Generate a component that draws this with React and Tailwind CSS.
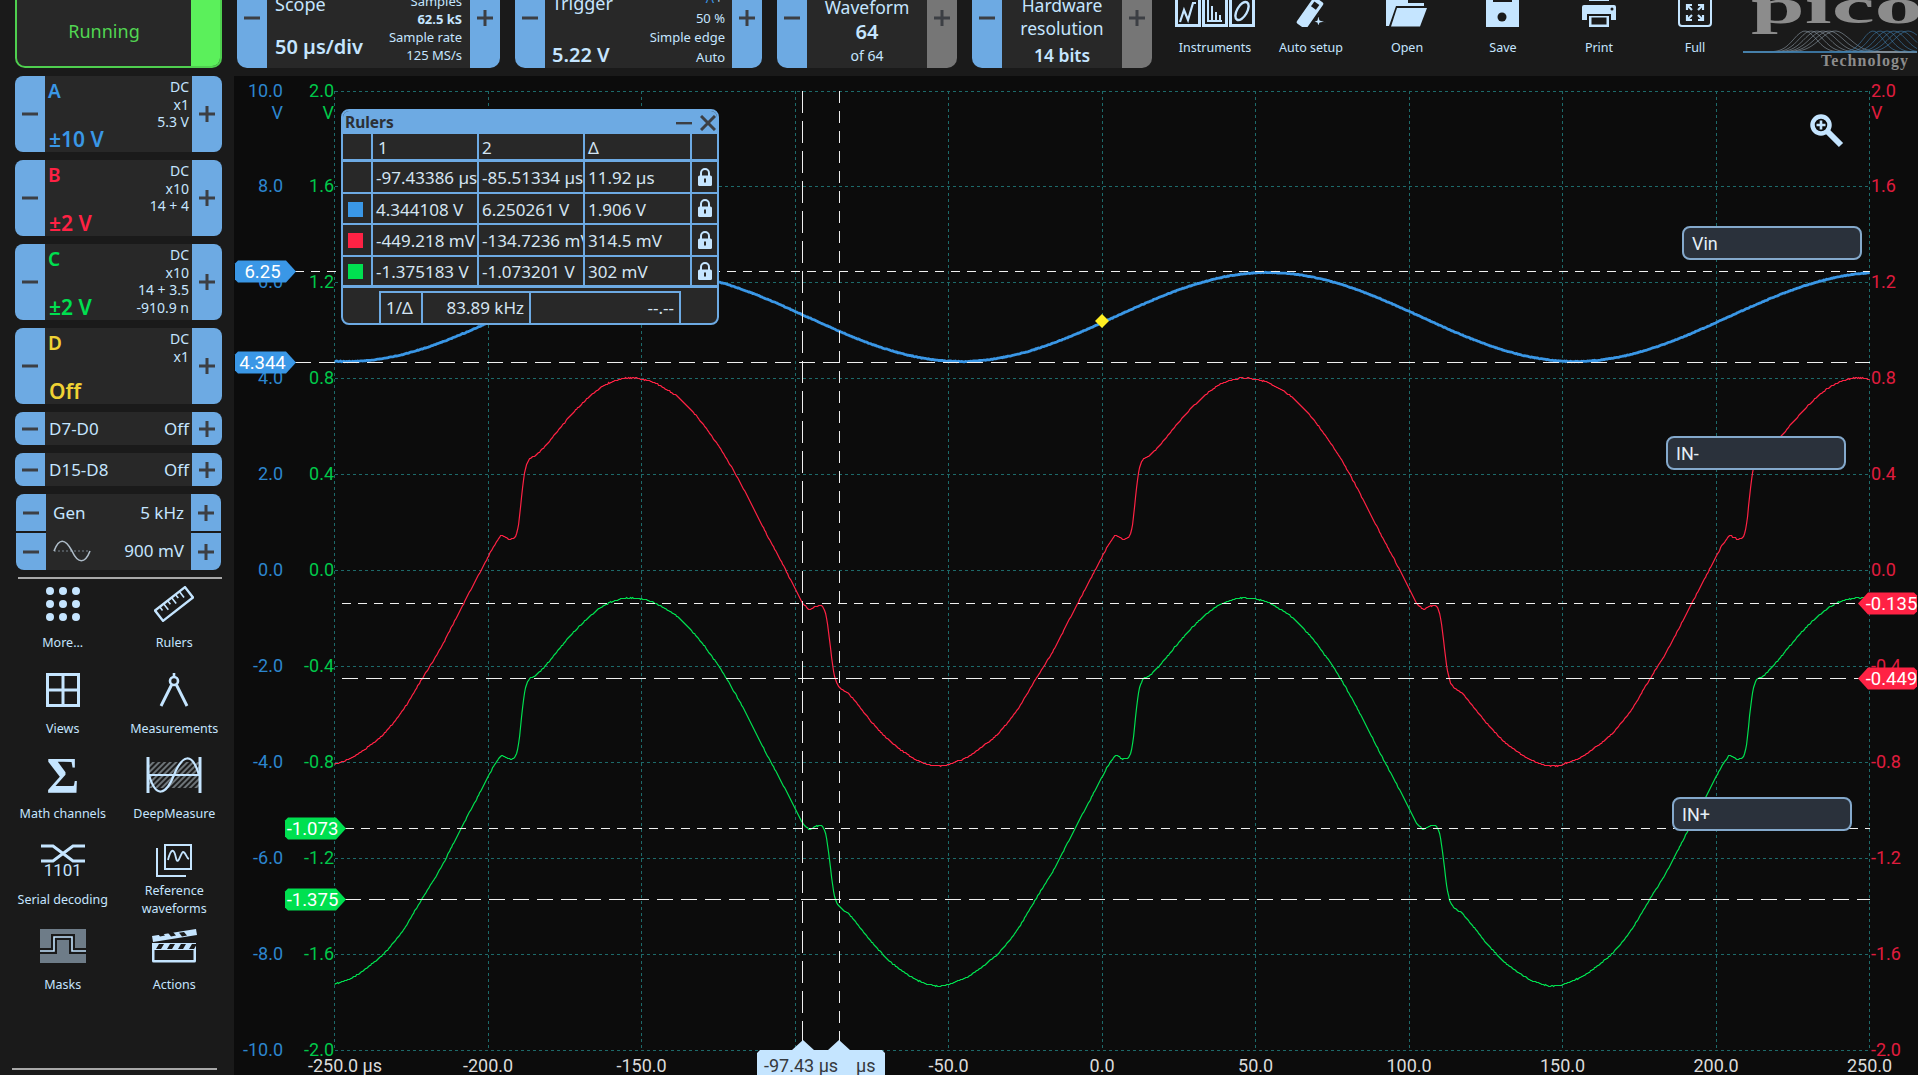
import React from "react";

const LB = "#c5e5ff";
const BTN = "bg-[#6daae3]";

const PLOT_L = 334.6, PLOT_R = 1869.6, PLOT_T = 91, PLOT_B = 1050;
const DX = (PLOT_R - PLOT_L) / 10, DY = (PLOT_B - PLOT_T) / 10;
const PERIOD = 614;

const KEYS = [[334.6,764],[354.5,756.7],[383,735],[403.5,710],[422,678],[438,653],[462.6,605],[481,570],[493,546.7],[501.4,534.3],[509.6,539],[515.7,536.7],[519,523],[521.8,493],[525,468],[528.8,458.3],[536,455],[546,445],[560.6,426.7],[575,410],[595,390.7],[611.6,380.7],[630,376.7],[652.4,380.7],[677,395],[699,418],[722,450],[742,485],[764.7,530],[785,568],[802.6,603],[809.3,609.3],[816.7,605.3],[822.7,605.3],[826,613.3],[829.3,636.7],[832.7,666.7],[836,681.7],[840,687.3],[850,694],[870,720],[890,741.7],[913.3,758.3],[930,765],[943.3,766],[948.6,764]];

function samplePeriod() {
  const raw = [];
  let k = 0;
  for (let i = 0; i < PERIOD; i++) {
    const x = PLOT_L + i;
    while (k < KEYS.length - 2 && KEYS[k + 1][0] < x) k++;
    const [x0, y0] = KEYS[k], [x1, y1] = KEYS[k + 1];
    raw.push(y0 + ((y1 - y0) * (x - x0)) / (x1 - x0));
  }
  return raw.map((_, i) => {
    const x = PLOT_L + i;
    const stepped = (x > 492 && x < 540) || (x > 796 && x < 850);
    const r = stepped ? 1 : 7;
    let s = 0;
    for (let j = -r; j <= r; j++) s += raw[(i + j + PERIOD) % PERIOD];
    return s / (2 * r + 1);
  });
}
const SHAPE = samplePeriod();
const noise = (i, seed) => {
  const v = Math.sin(i * 12.9898 + seed) * 43758.5453;
  return (v - Math.floor(v) - 0.5) * 0.9;
};
function tracePts(offset, seed) {
  const p = [];
  for (let i = 0; i <= PLOT_R - PLOT_L; i++) {
    const y = SHAPE[i % PERIOD] + offset + noise(i, seed);
    p.push(`${(PLOT_L + i).toFixed(1)},${Math.round(y) + 0.5}`);
  }
  return p.join(" ");
}
function bluePts() {
  const p = [];
  for (let i = 0; i <= PLOT_R - PLOT_L; i++) {
    const x = PLOT_L + i;
    const y = 317 + 44.5 * Math.cos((2 * Math.PI * (x - 347)) / PERIOD) + noise(i, 5) * 0.7;
    p.push(`${x.toFixed(1)},${y.toFixed(1)}`);
  }
  return p.join(" ");
}

const range = (n) => Array.from({ length: n }, (_, i) => i);
const BLUE_L = ["10.0","8.0","6.0","4.0","2.0","0.0","-2.0","-4.0","-6.0","-8.0","-10.0"];
const VOLT = ["2.0","1.6","1.2","0.8","0.4","0.0","-0.4","-0.8","-1.2","-1.6","-2.0"];
const TIME = ["-250.0","-200.0","-150.0","","-50.0","0.0","50.0","100.0","150.0","200.0","250.0"];

function MinusG() {
  return <svg width="16" height="16" viewBox="0 0 16 16"><rect x="0" y="6.5" width="16" height="3" fill="#3c3f44" /></svg>;
}
function PlusG() {
  return <svg width="16" height="16" viewBox="0 0 16 16"><rect x="0" y="6.5" width="16" height="3" fill="#3c3f44" /><rect x="6.5" y="0" width="3" height="16" fill="#3c3f44" /></svg>;
}
function SideBtn({ plus, grey, extra = "" }) {
  return (
    <div className={`flex w-[30px] shrink-0 items-center justify-center ${grey ? "bg-[#767676]" : BTN} ${extra}`}>
      {plus ? <PlusG /> : <MinusG />}
    </div>
  );
}

function Channel({ name, color, range: rng, lines }) {
  return (
    <div className="flex h-[76px] overflow-hidden rounded-[8px]">
      <SideBtn />
      <div className="relative flex flex-1 justify-between bg-[#282828] pl-[3px] pr-[3px]">
        <div className="flex flex-col justify-between">
          <div className="mt-[1px] text-[19px] font-semibold leading-[28px]" style={{ color }}>{name}</div>
          <div className="pl-[1px] text-[21px] font-semibold leading-[26px]" style={{ color }}>{rng}</div>
        </div>
        <div className="flex flex-col items-end pt-[2px] text-[14px] leading-[17.5px] text-[#c5e5ff]">
          {lines.map((l) => <div key={l} className="whitespace-nowrap">{l}</div>)}
        </div>
      </div>
      <SideBtn plus />
    </div>
  );
}

function Digital({ name }) {
  return (
    <div className="flex h-[33px] overflow-hidden rounded-[8px]">
      <SideBtn />
      <div className="flex flex-1 items-center justify-between bg-[#282828] pl-[4px] pr-[3px] text-[17px] text-[#c5e5ff]">
        <span>{name}</span><span>Off</span>
      </div>
      <SideBtn plus />
    </div>
  );
}

function Gen() {
  return (
    <div className="ml-[1px] flex h-[76px] w-[205px] overflow-hidden rounded-[8px]">
      <div className="flex w-[30px] flex-col gap-[2px]">
        <SideBtn extra="flex-1 w-full" /><SideBtn extra="flex-1 w-full" />
      </div>
      <div className="flex flex-1 flex-col bg-[#282828] px-[7px] text-[17px] text-[#c5e5ff]">
        <div className="flex h-[38px] items-center justify-between"><span>Gen</span><span>5 kHz</span></div>
        <div className="flex h-[38px] items-center justify-between">
          <svg width="38" height="26" viewBox="0 0 38 26">
            <line x1="1" y1="13" x2="37" y2="13" stroke="#77828c" strokeWidth="1" strokeDasharray="2 2" />
            <path d="M1 13 C6 0 12 0 19 13 C25 26 32 26 37 13" fill="none" stroke="#aebcc8" strokeWidth="1.6" />
          </svg>
          <span>900 mV</span>
        </div>
      </div>
      <div className="flex w-[30px] flex-col gap-[2px]">
        <SideBtn plus extra="flex-1 w-full" /><SideBtn plus extra="flex-1 w-full" />
      </div>
    </div>
  );
}

const IconMore = () => (
  <svg width="34" height="34" viewBox="0 0 34 34" fill={LB}>
    {[4, 17, 30].flatMap((y) => [4, 17, 30].map((x) => <circle key={`${x}-${y}`} cx={x} cy={y} r="4" />))}
  </svg>
);
const IconRuler = () => (
  <svg width="40" height="36" viewBox="0 0 40 36" fill="none" stroke={LB} strokeWidth="2.4">
    <g transform="rotate(-38 20 18)">
      <rect x="1" y="11.5" width="38" height="13" />
      {[7, 12, 17, 22, 27, 32].map((x, i) => <line key={x} x1={x} y1="12" x2={x} y2={i % 2 ? 19 : 16} strokeWidth="1.6" />)}
    </g>
  </svg>
);
const IconViews = () => (
  <svg width="34" height="34" viewBox="0 0 34 34" fill="none" stroke={LB} strokeWidth="3">
    <rect x="1.5" y="1.5" width="31" height="31" /><line x1="17" y1="1" x2="17" y2="33" /><line x1="1" y1="17" x2="33" y2="17" />
  </svg>
);
const IconCompass = () => (
  <svg width="30" height="34" viewBox="0 0 30 34" fill="none" stroke={LB} strokeWidth="2.6">
    <circle cx="15" cy="8" r="4" /><line x1="15" y1="0" x2="15" y2="4" />
    <path d="M12.5 12 L2 33" strokeWidth="3" /><path d="M17.5 12 L28 33" strokeWidth="3" />
  </svg>
);
const IconSigma = () => (
  <div className="font-['Liberation_Serif',serif] text-[50px] font-bold leading-[36px] text-[#c5e5ff]">Σ</div>
);
const IconDeep = () => (
  <svg width="56" height="36" viewBox="0 0 56 36" fill="none">
    <defs>
      <pattern id="hatch" width="4" height="4" patternUnits="userSpaceOnUse" patternTransform="rotate(45)">
        <rect width="2" height="4" fill="#6d7478" />
      </pattern>
    </defs>
    <rect x="3" y="5" width="50" height="26" fill="url(#hatch)" />
    <line x1="2" y1="0" x2="2" y2="36" stroke={LB} strokeWidth="3" />
    <line x1="54" y1="0" x2="54" y2="36" stroke={LB} strokeWidth="3" />
    <line x1="2" y1="18" x2="54" y2="18" stroke={LB} strokeWidth="2" />
    <path d="M3 18 C10 42 20 38 28 18 C36 -2 46 -6 53 18" stroke={LB} strokeWidth="2.2" />
  </svg>
);
const IconSerial = () => (
  <div className="flex flex-col items-center">
    <svg width="44" height="19" viewBox="0 0 44 19" fill="none" stroke={LB} strokeWidth="3">
      <path d="M0 2 H12 L32 17 H44" /><path d="M0 17 H12 L32 2 H44" />
    </svg>
    <div className="font-['Roboto',sans-serif] text-[17px] leading-[15px] text-[#c5e5ff]">1101</div>
  </div>
);
const IconRef = () => (
  <svg width="38" height="34" viewBox="0 0 38 34" fill="none" stroke={LB} strokeWidth="1.8">
    <rect x="10" y="1" width="26" height="24" strokeWidth="2" />
    <path d="M13 16 C16 4 19 4 21 14 C23 23 26 8 28 8 C31 8 31 14 34 15" />
    <path d="M2 4 V32 H31" strokeWidth="2" />
  </svg>
);
const IconMasks = () => (
  <svg width="46" height="34" viewBox="0 0 46 34">
    <rect width="46" height="34" fill="#6e7c88" />
    <path d="M0 22 H14 V8 H32 V22 H46" fill="none" stroke="#1a1a1a" strokeWidth="6" />
    <path d="M0 22 H14 V8 H32 V22 H46" fill="none" stroke={LB} strokeWidth="1.6" />
  </svg>
);
const IconActions = () => (
  <svg width="46" height="34" viewBox="0 0 46 34" fill={LB}>
    <path d="M1 7 L45 0 L46 6 L2 13 Z" />
    <path d="M1 14 H45 V32 a1.5 1.5 0 0 1 -1.5 1.5 H2.5 A1.5 1.5 0 0 1 1 32 Z" />
    <rect x="3.5" y="21" width="39" height="10" fill="#1a1a1a" />
    {[8, 19, 30, 41].map((x) => <path key={x} d={`M${x} 15 h5 l-3 5 h-5 Z`} fill="#1a1a1a" />)}
    {[9, 20, 31].map((x) => <path key={x} d={`M${x} 7.5 l5 -1 l-3 -3.6 l-5 .9 Z`} fill="#1a1a1a" />)}
  </svg>
);

const TOOLS = [
  ["More...", IconMore], ["Rulers", IconRuler],
  ["Views", IconViews], ["Measurements", IconCompass],
  ["Math channels", IconSigma], ["DeepMeasure", IconDeep],
  ["Serial decoding", IconSerial], ["Reference waveforms", IconRef],
  ["Masks", IconMasks], ["Actions", IconActions],
];

function Aside() {
  return (
    <aside className="flex h-full w-[234px] shrink-0 flex-col bg-[#1a1a1a]">
      <div className="ml-[15px] flex w-[207px] flex-col gap-[8px]">
        <div className="flex h-[68px] overflow-hidden rounded-b-[10px] border-2 border-t-0 border-[#4fcf4f] bg-[#282828]">
          <div className="flex flex-1 items-start justify-center pt-[17px] text-[18px] leading-[28px] text-[#52d652]">Running</div>
          <div className="w-[29px] bg-[#5bf05b]" />
        </div>
        <Channel name="A" color="#3a97e6" range="±10 V" lines={["DC", "x1", "5.3 V"]} />
        <Channel name="B" color="#ff2244" range="±2 V" lines={["DC", "x10", "14 + 4"]} />
        <Channel name="C" color="#00e050" range="±2 V" lines={["DC", "x10", "14 + 3.5", "-910.9 n"]} />
        <Channel name="D" color="#f0d234" range="Off" lines={["DC", "x1"]} />
        <Digital name="D7-D0" />
        <Digital name="D15-D8" />
        <Gen />
      </div>
      <div className="ml-[18px] mt-[7px] h-[2px] w-[204px] bg-[#a8a8a8]" />
      <div className="ml-[7px] mt-[4px] grid w-[223px] auto-rows-[85.5px] grid-cols-2 text-[12.5px] text-[#c5e5ff]">
        {TOOLS.map(([label, Icon]) => (
          <div key={label} className="flex flex-col items-center">
            <div className="flex h-[42px] items-center justify-center"><Icon /></div>
            <div className="flex h-[36px] items-center text-center leading-[18px]">{label}</div>
          </div>
        ))}
      </div>
      <div className="mb-[5px] ml-[12px] mt-auto h-[2px] w-[205px] bg-[#a8a8a8]" />
    </aside>
  );
}

function TopCard({ w, rightGrey, children, extra = "" }) {
  return (
    <div className={`mb-[8px] flex h-[100px] shrink-0 overflow-hidden rounded-b-[10px] ${extra}`} style={{ width: w }}>
      <SideBtn />
      <div className="flex flex-1 bg-[#282828] text-[#c5e5ff]">{children}</div>
      <SideBtn plus grey={rightGrey} />
    </div>
  );
}

const IconInstruments = () => (
  <svg width="80" height="27" viewBox="0 0 80 27" fill="none" stroke={LB} strokeWidth="3">
    <path d="M1.5 -3 V25.5 H24.5 V-3" /><path d="M28.5 -3 V25.5 H51.5 V-3" /><path d="M55.5 -3 V25.5 H78.5 V-3" />
    <path d="M5 22 L9 10 L13 20 L18 3 L21 3" strokeWidth="2.2" />
    <path d="M33 0 V21 H47 M37 6 V21 M41 12 V21 M45 15 V21" strokeWidth="2" />
    <ellipse cx="67" cy="11" rx="5" ry="10" transform="rotate(30 67 11)" strokeWidth="2.4" />
  </svg>
);
const IconWand = () => (
  <svg width="30" height="27" viewBox="0 0 30 27" fill={LB}>
    <g transform="rotate(-55 14 13)"><rect x="-2" y="7" width="32" height="12" rx="2" /><rect x="20" y="10" width="6" height="6" fill="#1a1a1a" /></g>
    <path d="M22 14 L24 20 L30 22 L24 23 L22 27 L21 23 L17 22 L21 20 Z" stroke="#1a1a1a" strokeWidth="1.2" />
  </svg>
);
const IconOpen = () => (
  <svg width="42" height="27" viewBox="0 0 42 27" fill={LB}>
    <path d="M0 -3 H22 V3 H38 V6 H10 L3 26 H0 Z" />
    <path d="M11 8 H41 L34 26.5 H5 Z" />
  </svg>
);
const IconSave = () => (
  <svg width="34" height="27" viewBox="0 0 34 27" fill={LB}>
    <path d="M0 -4 H28 L33 0 V27 H0 Z" />
    <rect x="7" y="-4" width="19" height="6" fill="#1a1a1a" />
    <circle cx="16" cy="17" r="4.5" fill="#1a1a1a" />
  </svg>
);
const IconPrint = () => (
  <svg width="36" height="27" viewBox="0 0 36 27" fill={LB}>
    <rect x="8" y="-6" width="20" height="7" />
    <path d="M3 5 H33 a2 2 0 0 1 2 2 V20 H30 V14 H6 V20 H1 V7 a2 2 0 0 1 2 -2 Z" />
    <rect x="8" y="16" width="20" height="11" />
    <rect x="10.5" y="17.5" width="15" height="7" fill="#1a1a1a" />
    <circle cx="31" cy="9" r="1.5" fill="#1a1a1a" />
  </svg>
);
const IconFull = () => (
  <svg width="36" height="28" viewBox="0 0 36 28" fill="none" stroke={LB} strokeWidth="2">
    <path d="M2 -4 V23 a3 3 0 0 0 3 3 H31 a3 3 0 0 0 3 -3 V-4" />
    {[[10, 5, 1, 1], [26, 5, -1, 1], [10, 20, 1, -1], [26, 20, -1, -1]].map(([x, y, sx, sy]) => (
      <g key={`${x}${y}`} strokeWidth="2.2">
        <path d={`M${x} ${y} l${sx * 5} ${sy * 5}`} />
        <path d={`M${x} ${y + sy * 5} V${y} H${x + sx * 5}`} />
      </g>
    ))}
  </svg>
);

function ToolBtn({ Icon, label }) {
  return (
    <div className="flex h-full w-[96px] shrink-0 flex-col items-center text-[12.5px] text-[#c5e5ff]">
      <div className="flex h-[27px] items-start"><Icon /></div>
      <div className="mt-[12px] leading-[18px]">{label}</div>
    </div>
  );
}

function wave(c, w, h, base) {
  const pts = [];
  for (let x = 0; x <= 176; x += 3) pts.push(`${x},${(base - h * Math.exp(-(((x - c) / w) ** 2))).toFixed(1)}`);
  return pts.join(" ");
}
function Logo() {
  return (
    <svg width="175" height="76" viewBox="0 0 175 76" className="shrink-0">
      <text x="8" y="23" fontSize="50" fontWeight="700" fill="#8c8c8c" textLength="172" lengthAdjust="spacingAndGlyphs" className="font-['Liberation_Serif',serif]">pico</text>
      {[0, 1, 2, 3, 4, 5].map((i) => <polyline key={i} points={wave(62 + i * 6, 16 + i, 21, 52)} fill="none" stroke="#8d9aa6" strokeWidth="0.6" />)}
      {[0, 1, 2, 3, 4, 5].map((i) => <polyline key={`b${i}`} points={wave(130 + i * 7, 14 + i, 21, 52)} fill="none" stroke="#3f7fb0" strokeWidth="0.6" />)}
      <text x="78" y="66" fontSize="16" fontWeight="700" fill="#8c8c8c" textLength="87" className="font-['Liberation_Serif',serif]">Technology</text>
    </svg>
  );
}

function Toolbar() {
  return (
    <div className="flex h-[76px] items-end overflow-hidden bg-[#1a1a1a] pl-[3px]">
      <TopCard w={263}>
        <div className="flex flex-1 justify-between pl-[8px] pr-[8px]">
          <div className="flex flex-col justify-end pb-[8px]">
            <div className="mb-[18px] text-[18px] leading-[24px]">Scope</div>
            <div className="whitespace-nowrap text-[20px] font-semibold leading-[26px]">50 µs/div</div>
          </div>
          <div className="flex flex-col items-end justify-end pb-[4px] text-[13px] leading-[18px]">
            <div>Samples</div>
            <div className="font-bold">62.5 kS</div>
            <div>Sample rate</div>
            <div>125 MS/s</div>
          </div>
        </div>
      </TopCard>
      <TopCard w={247} extra="ml-[15px]">
        <div className="flex flex-1 justify-between pl-[7px] pr-[7px]">
          <div className="flex flex-col justify-end">
            <div className="mb-[27px] text-[18px] leading-[24px]">Trigger</div>
            <div className="text-[20px] font-semibold leading-[26px]">5.22 V</div>
          </div>
          <div className="flex flex-col items-end justify-end pb-[1px] text-[13px] leading-[19.5px]">
            <div className="text-[#3a97e6]">A <span className="text-[#c5e5ff]">⌐</span></div>
            <div>50 %</div>
            <div>Simple edge</div>
            <div>Auto</div>
          </div>
        </div>
      </TopCard>
      <TopCard w={180} rightGrey extra="ml-[15px]">
        <div className="flex flex-1 flex-col items-center justify-end pb-[1px]">
          <div className="text-[17.5px] leading-[24px]">Waveform</div>
          <div className="text-[20px] font-semibold leading-[26px]">64</div>
          <div className="text-[14px] leading-[22px]">of 64</div>
        </div>
      </TopCard>
      <TopCard w={180} rightGrey extra="ml-[15px]">
        <div className="flex flex-1 flex-col items-center justify-end pb-[1px]">
          <div className="text-[17.5px] leading-[23px]">Hardware</div>
          <div className="text-[17.5px] leading-[23px]">resolution</div>
          <div className="mt-[3px] text-[17.5px] font-semibold leading-[24px]">14 bits</div>
        </div>
      </TopCard>
      <div className="ml-[15px] flex h-full">
        <ToolBtn Icon={IconInstruments} label="Instruments" />
        <ToolBtn Icon={IconWand} label="Auto setup" />
        <ToolBtn Icon={IconOpen} label="Open" />
        <ToolBtn Icon={IconSave} label="Save" />
        <ToolBtn Icon={IconPrint} label="Print" />
        <ToolBtn Icon={IconFull} label="Full" />
      </div>
      <Logo />
    </div>
  );
}

function Lock() {
  return (
    <svg width="14" height="18" viewBox="0 0 14 18">
      <path d="M3 8 V5 a4 4 0 0 1 8 0 V8" fill="none" stroke={LB} strokeWidth="2" />
      <rect x="0" y="7.5" width="14" height="10.5" rx="1.5" fill={LB} />
      <rect x="6" y="10.5" width="2" height="4" fill="#282828" />
    </svg>
  );
}

const ROWS = [
  [null, "-97.43386 µs", "-85.51334 µs", "11.92 µs"],
  ["#3a97e6", "4.344108 V", "6.250261 V", "1.906 V"],
  ["#ff2244", "-449.218 mV", "-134.7236 mV", "314.5 mV"],
  ["#00e050", "-1.375183 V", "-1.073201 V", "302 mV"],
];

function RulerCell({ children, extra = "" }) {
  return <div className={`flex items-center overflow-hidden whitespace-nowrap border-r-2 border-[#6daae3] pl-[3px] pt-[2px] ${extra}`}>{children}</div>;
}

function RulersPanel() {
  return (
    <div className="absolute left-[107px] top-[33px] flex h-[216px] w-[378px] flex-col overflow-hidden rounded-[8px] border-2 border-[#6daae3] bg-[#282828] text-[17px] text-[#d4e4f2]">
      <div className="flex h-[23px] shrink-0 items-center justify-between bg-[#6daae3] pl-[2px] pr-[1px]">
        <span className="text-[15.5px] font-bold text-[#2c3036]">Rulers</span>
        <div className="flex items-center gap-[8px]">
          <svg width="16" height="14" viewBox="0 0 16 14"><rect y="6" width="16" height="2.4" fill="#3c3f44" /></svg>
          <svg width="16" height="16" viewBox="0 0 16 16"><path d="M1 1 L15 15 M15 1 L1 15" stroke="#3c3f44" strokeWidth="3" /></svg>
        </div>
      </div>
      <div className="grid h-[28px] shrink-0 grid-cols-[30px_106px_106px_107px_25px] border-b-[3px] border-[#6daae3]">
        <RulerCell /><RulerCell extra="pl-[5px]">1</RulerCell><RulerCell>2</RulerCell><RulerCell>Δ</RulerCell>
        <div />
      </div>
      {ROWS.map(([c, a, b, d], i) => (
        <div key={a} className={`grid h-[31.5px] shrink-0 grid-cols-[30px_106px_106px_107px_25px] border-[#6daae3] ${i === 3 ? "border-b-[3px]" : "border-b-2"}`}>
          <RulerCell extra="justify-center pl-[0px] pr-[6px]">
            {c && <div className="h-[15px] w-[15px]" style={{ backgroundColor: c }} />}
          </RulerCell>
          <RulerCell>{a}</RulerCell>
          <RulerCell>{b}</RulerCell>
          <RulerCell>{d}</RulerCell>
          <div className="flex items-center justify-center"><Lock /></div>
        </div>
      ))}
      <div className="flex flex-1 pl-[36px] pt-[3px]">
        <div className="flex w-[44px] items-center border-2 border-b-0 border-[#6daae3] pl-[5px]">1/Δ</div>
        <div className="flex w-[108px] items-center justify-end border-t-2 border-r-2 border-[#6daae3] pr-[5px]">83.89 kHz</div>
        <div className="flex w-[150px] items-center justify-end border-t-2 border-r-2 border-[#6daae3] pr-[5px]">--.--</div>
      </div>
    </div>
  );
}

function NameTag({ name, extra }) {
  return (
    <div className={`absolute flex items-center rounded-[8px] border-2 border-[#84a9cc] bg-[#2a313b] pl-[8px] font-['Roboto',sans-serif] text-[18px] text-[#e4eef6] ${extra}`}>{name}</div>
  );
}

function Tag({ dir, y, x0, x1, fill, text }) {
  const h = 11;
  const pts = dir === "right"
    ? `${x0 + 3},${y - h} ${x1 - 10},${y - h} ${x1},${y} ${x1 - 10},${y + h} ${x0 + 3},${y + h} ${x0},${y + h - 3} ${x0},${y - h + 3}`
    : `${x1 - 3},${y - h} ${x0 + 10},${y - h} ${x0},${y} ${x0 + 10},${y + h} ${x1 - 3},${y + h} ${x1},${y + h - 3} ${x1},${y - h + 3}`;
  const tx = dir === "right" ? x0 + (x1 - x0 - 6) / 2 : x0 + 8 + (x1 - x0 - 8) / 2;
  return (
    <g>
      <polygon points={pts} fill={fill} />
      <text x={tx} y={y} textAnchor="middle" dominantBaseline="central" fontSize="18.5" fill="#ffffff">{text}</text>
    </g>
  );
}

function Plot() {
  return (
    <div className="relative h-[999px] overflow-hidden bg-[#0c0c0c]">
      <svg width="1684" height="999" viewBox="234 76 1684 999" className="block font-['Roboto',sans-serif]">
        <g stroke="#1d6a6a" strokeWidth="1" strokeDasharray="3 3" shapeRendering="crispEdges">
          {range(11).map((i) => <line key={`v${i}`} x1={PLOT_L + i * DX} y1={PLOT_T} x2={PLOT_L + i * DX} y2={PLOT_B} />)}
          {range(11).map((i) => <line key={`h${i}`} x1={PLOT_L} y1={PLOT_T + i * DY} x2={PLOT_R} y2={PLOT_T + i * DY} />)}
        </g>
        <g fontSize="18">
          {BLUE_L.map((t, i) => <text key={t} x="283" y={PLOT_T - 1 + i * DY} textAnchor="end" fill="#2c86cf" dominantBaseline="central">{t}</text>)}
          {VOLT.map((t, i) => <text key={t} x="334" y={PLOT_T - 1 + i * DY} textAnchor="end" fill="#00c84a" dominantBaseline="central">{t}</text>)}
          {VOLT.map((t, i) => <text key={t} x="1871" y={PLOT_T - 1 + i * DY} fill="#e01c3e" dominantBaseline="central">{t}</text>)}
          <text x="283" y="112" textAnchor="end" fill="#2c86cf" dominantBaseline="central">V</text>
          <text x="334" y="112" textAnchor="end" fill="#00c84a" dominantBaseline="central">V</text>
          <text x="1871" y="112" fill="#e01c3e" dominantBaseline="central">V</text>
          {TIME.map((t, i) => t && (
            <text key={t} x={i === 0 ? 345 : PLOT_L + i * DX} y="1065.5" textAnchor="middle" fill="#dcdcdc" dominantBaseline="central">{i === 0 ? `${t} µs` : t}</text>
          ))}
        </g>
        <polyline points={bluePts()} fill="none" stroke="#3a97e6" strokeWidth="2.8" />
        <polyline points={tracePts(0, 1)} fill="none" stroke="#ff2244" strokeWidth="1.2" />
        <polyline points={tracePts(220, 2)} fill="none" stroke="#00e050" strokeWidth="1.2" />
        <polygon points="1102,314 1109,321 1102,328 1095,321" fill="#ffee22" />

        <g stroke="#f0f0f0" strokeWidth="1.4" fill="none" shapeRendering="crispEdges">
          <line x1="295" y1="271.5" x2="1870" y2="271.5" strokeDasharray="9 7" />
          <line x1="295" y1="362.5" x2="1870" y2="362.5" strokeDasharray="16 8" />
          <line x1="342" y1="603.5" x2="1860" y2="603.5" strokeDasharray="9 7" />
          <line x1="342" y1="678.5" x2="1860" y2="678.5" strokeDasharray="16 8" />
          <line x1="345" y1="828.5" x2="1870" y2="828.5" strokeDasharray="9 7" />
          <line x1="345" y1="899.5" x2="1870" y2="899.5" strokeDasharray="16 8" />
          <line x1="802.5" y1="91" x2="802.5" y2="1042" strokeDasharray="22 8" />
          <line x1="839.5" y1="91" x2="839.5" y2="1042" strokeDasharray="12 8" />
        </g>

        <polygon points="760,1050 792,1050 803,1040 814,1050 828,1050 839,1040 850,1050 882,1050 885,1053 885,1075 757,1075 757,1053" fill={LB} />
        <text x="764" y="1065.5" fontSize="18" fill="#35393e" dominantBaseline="central">-97.43 µs</text>
        <text x="856" y="1065.5" fontSize="18" fill="#35393e" dominantBaseline="central">µs</text>

        <Tag dir="right" y={271.5} x0={235} x1={296} fill="#3a97e6" text="6.25" />
        <Tag dir="right" y={362.5} x0={235} x1={296} fill="#3a97e6" text="4.344" />
        <Tag dir="right" y={828.5} x0={285} x1={346} fill="#00e050" text="-1.073" />
        <Tag dir="right" y={899.5} x0={285} x1={346} fill="#00e050" text="-1.375" />
        <Tag dir="left" y={603.5} x0={1858} x1={1917} fill="#ff2244" text="-0.135" />
        <Tag dir="left" y={678.5} x0={1858} x1={1917} fill="#ff2244" text="-0.449" />

        <g transform="translate(1810 114)">
          <line x1="13" y1="13" x2="31" y2="31" stroke={LB} strokeWidth="6" />
          <circle cx="11" cy="11" r="8.5" fill="#0c0c0c" stroke={LB} strokeWidth="4.5" />
          <path d="M11 6.5 V15.5 M6.5 11 H15.5" stroke={LB} strokeWidth="2.6" />
        </g>
      </svg>
      <NameTag name="Vin" extra="left-[1448px] top-[150px] h-[34px] w-[180px]" />
      <NameTag name="IN-" extra="left-[1432px] top-[360px] h-[34px] w-[180px]" />
      <NameTag name="IN+" extra="left-[1438px] top-[721px] h-[34px] w-[180px]" />
      <RulersPanel />
    </div>
  );
}

export default function App() {
  return (
    <div className="flex h-[1075px] w-[1918px] overflow-hidden bg-[#0c0c0c] font-['Noto_Sans',sans-serif]">
      <Aside />
      <div className="flex min-w-0 flex-1 flex-col">
        <Toolbar />
        <Plot />
      </div>
    </div>
  );
}
